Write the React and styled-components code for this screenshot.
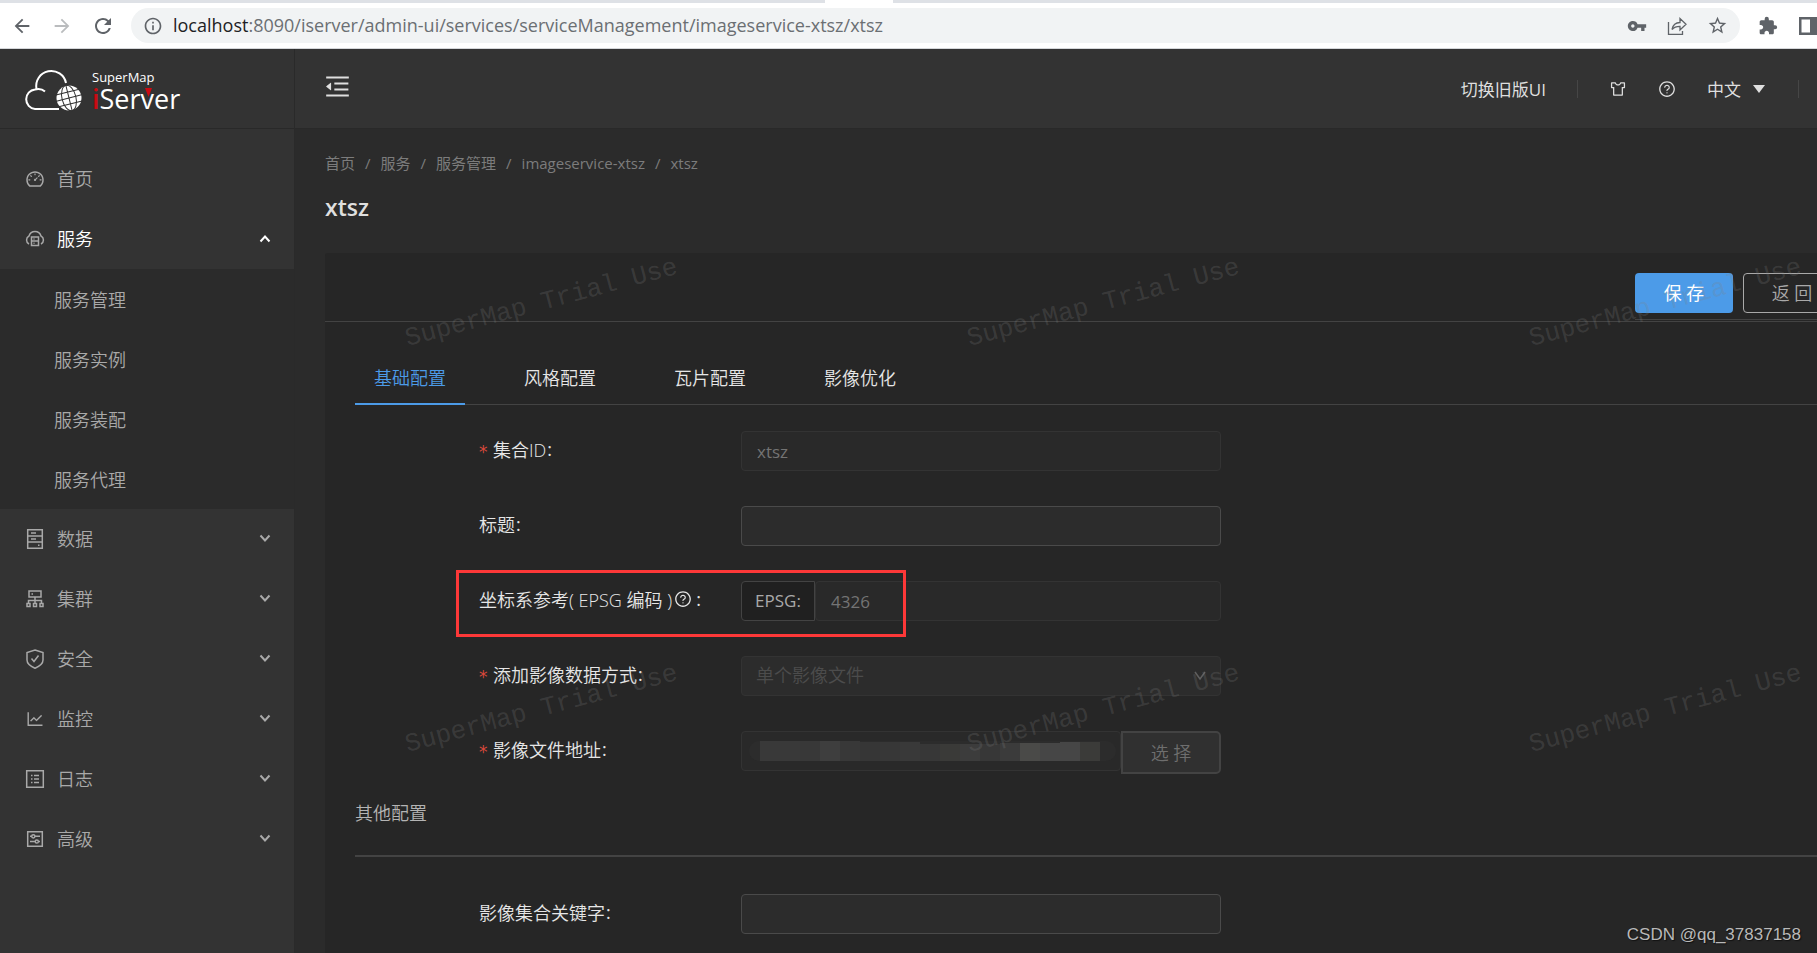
import React from "react";
import styled, { createGlobalStyle, css } from "styled-components";
import {
  AiOutlineDashboard,
  AiOutlineLineChart,
  AiOutlineMenuFold,
  AiOutlineQuestionCircle,
  AiOutlineSkin,
} from "react-icons/ai";
import {
  MdArrowBack,
  MdArrowForward,
  MdExtension,
  MdInfoOutline,
  MdRefresh,
  MdStarOutline,
  MdVpnKey,
} from "react-icons/md";

const GlobalStyle = createGlobalStyle`
* {
    box-sizing: border-box;
}
body {
    margin: 0;
    background-color: #2b2b2b;
    font-family: "Open Sans", "Noto Sans CJK SC", sans-serif;
    font-size: 18px;
    font-weight: 350;
    color: #dfdfdf;
}
button, input, select {
    font: inherit;
    color: inherit;
}
a {
    color: inherit;
    text-decoration: none;
}
`

const Window = styled.div`
height: 100vh;
display: flex;
flex-direction: column;
overflow: hidden;
`

//Browser bar
const TabStrip = styled.div`
height: 3px;
flex: none;
background-color: #dee1e6;
`

const ActiveTab = styled.div`
width: 68px;
height: 3px;
margin-left: 45.4%;
background-color: #ffffff;
`

const BrowserBar = styled.div`
height: 46px;
flex: none;
display: flex;
align-items: center;
padding-left: 11px;
background-color: #ffffff;
border-bottom: 1px solid #d5d7da;
color: #5f6368;
overflow: hidden;
`

const NavButton = styled.button`
width: 40px;
height: 24px;
flex: none;
display: flex;
align-items: center;
padding: 0;
border: 0;
background: none;
color: ${(props) => (props.disabled ? "#babcbe" : "#5f6368")};
`

const AddressBar = styled.div`
flex: 1;
height: 35px;
display: flex;
align-items: center;
gap: 10px;
padding: 0 12px;
border-radius: 18px;
background-color: #f1f3f4;
`

const Url = styled.div`
flex: 1;
padding-bottom: 2px;
font-size: 18px;
font-weight: 400;
color: #6b6f73;
span {
    color: #202124;
}
`

const AddressIcons = styled.div`
display: flex;
align-items: center;
gap: 20px;
`

const BrowserIcons = styled.div`
display: flex;
flex: none;
align-items: center;
gap: 20px;
margin-right: -1px;
padding-left: 18px;
`

//Page frame
const Page = styled.div`
flex: 1;
display: flex;
min-height: 0;
position: relative;
overflow: hidden;
`

const Sidebar = styled.aside`
width: 295px;
flex: none;
background-color: #333333;
border-right: 1px solid #2a2a2a;
`

const Brand = styled.a`
height: 80px;
display: flex;
align-items: center;
padding-left: 24px;
border-bottom: 1px solid #292929;
`

const Menu = styled.nav`
padding-top: 20px;
`

const MenuItem = styled.a`
height: 60px;
display: flex;
align-items: center;
padding: 0 23px 0 25px;
color: ${(props) => (props.$open ? "#ffffff" : "#a9a9a9")};
span {
    flex: 1;
    padding: 0 0 2px 12px;
}
> svg:first-child {
    color: #a9a9a9;
}
`

const SubMenu = styled.div`
background-color: #2b2b2b;
`

const SubItem = styled.a`
height: 60px;
display: flex;
align-items: center;
padding: 0 0 1px 54px;
color: #a9a9a9;
`

const Main = styled.main`
flex: 1;
min-width: 0;
display: flex;
flex-direction: column;
`

const TopBar = styled.header`
height: 80px;
flex: none;
display: flex;
align-items: center;
justify-content: space-between;
padding-left: 28px;
background-color: #333333;
border-bottom: 1px solid #292929;
`

const IconButton = styled.button`
display: flex;
padding: 0;
border: 0;
background: none;
color: #dfdfdf;
`

const FoldButton = styled(IconButton)`
padding-bottom: 4px;
`

const TopLinks = styled.div`
display: flex;
align-items: center;
gap: 31px;
padding-right: 18px;
font-size: 17px;
font-weight: 400;
`

const Divider = styled.i`
width: 1px;
height: 18px;
background-color: #464646;
`

const Language = styled.button`
display: flex;
align-items: center;
gap: 12px;
padding: 0 2px 0 0;
border: 0;
background: none;
`

//Content
const Content = styled.div`
flex: 1;
display: flex;
flex-direction: column;
padding: 19px 0 0 30px;
`

const Breadcrumb = styled.nav`
display: flex;
gap: 10px;
font-size: 15px;
font-weight: 400;
line-height: 30px;
color: #7c7c7c;
`

const Title = styled.h1`
margin: 12px 0 29px;
font-size: 23px;
line-height: 34px;
font-weight: 600;
`

const Panel = styled.section`
flex: 1;
background-color: #262626;
border-radius: 3px 0 0 0;
`

const Toolbar = styled.div`
display: flex;
justify-content: flex-end;
height: 69px;
padding-top: 20px;
border-bottom: 1px solid #434343;
`

const Actions = styled.div`
display: flex;
gap: 10px;
height: 47px;
margin-right: -24px;
border-bottom: 1px solid #434343;
`

const Button = styled.button`
width: 98px;
height: 40px;
padding: 0 0 2px;
border-radius: 4px;
white-space: pre;
${(props) =>
  props.$primary
    ? css`
        border: 0;
        background-color: #4c9be8;
        color: #ffffff;
        font-weight: 400;
      `
    : css`
        border: 1px solid #a9a9a9;
        background-color: transparent;
        color: #a9a9a9;
      `}
`

const Tabs = styled.div`
display: flex;
gap: 40px;
margin: 30px 0 26px 30px;
border-bottom: 1px solid #434343;
`

const Tab = styled.button`
height: 53px;
margin-bottom: -1px;
padding: 0 19px 2px;
border: 0;
border-bottom: 2px solid ${(props) => (props.$active ? "#4c9be8" : "transparent")};
background: none;
color: ${(props) => (props.$active ? "#4c9be8" : "#e6e6e6")};
`

const Form = styled.form`
display: grid;
gap: 35px;
`

const Row = styled.div`
display: grid;
grid-template-columns: 262px 480px;
height: 40px;
margin-left: 154px;
position: relative;
`

const Label = styled.label`
display: flex;
align-items: center;
height: 36px;
color: #e6e6e6;
`

const Required = styled.span`
width: 14px;
padding-top: 5px;
font-family: "DejaVu Sans", sans-serif;
font-size: 17px;
font-weight: 400;
color: #d9483b;
`

const Colon = styled.span`
padding-left: 1px;
font-weight: 400;
`

const HelpIcon = styled(AiOutlineQuestionCircle)`
margin: 0 3px 0 2px;
`

const Input = styled.input`
width: 100%;
min-width: 0;
height: 40px;
padding: 0 15px;
border: 1px solid #4a4a4a;
border-radius: 4px;
background-color: #2c2c2c;
font-size: 17px;
font-weight: 400;
&:disabled {
    border-color: #333333;
    background-color: #292929;
    color: #747474;
}
`

const Group = styled.div`
display: flex;
position: relative;
`

const Prefix = styled.span`
width: 74px;
flex: none;
line-height: 38px;
text-align: center;
border: 1px solid #434343;
border-radius: 4px 0 0 4px;
background-color: #202020;
font-size: 17px;
font-weight: 400;
color: #a9a9a9;
`

const SelectBox = styled.div`
position: relative;
svg {
    position: absolute;
    right: 15px;
    top: 15px;
}
`

const Select = styled.select`
appearance: none;
width: 100%;
height: 40px;
padding: 0 14px 2px;
border: 1px solid #333333;
border-radius: 4px;
background-color: #2c2c2c;
color: #4c4c4c;
opacity: 1;
`

const PickButton = styled.button`
width: 100px;
height: 43px;
flex: none;
padding: 0 0 2px;
white-space: pre;
border: 2px solid #434343;
border-radius: 0 5px 5px 0;
background-color: #303030;
color: #6e6e6e;
`

//Pixelated strip that hides the file path
const Mosaic = styled.div`
position: absolute;
left: 8px;
top: 10px;
width: 367px;
height: 20px;
display: flex;
padding-left: 11px;
border-radius: 10px;
background-color: #2c2c2c;
`

const Tile = styled.i`
width: 20px;
height: ${(props) => props.$height}px;
align-self: flex-end;
background-color: ${(props) => props.$color};
`

const Highlight = styled.div`
position: absolute;
left: -23px;
top: -11px;
width: 450px;
height: 67px;
border: 3px solid #fd3838;
pointer-events: none;
`

const SectionTitle = styled.h2`
margin: 27px 0 37px 30px;
padding-bottom: 27px;
border-bottom: 2px solid #434343;
font-size: 18px;
line-height: 30px;
font-weight: 350;
color: #b4b4b4;
`

//Marks laid over the whole page
const WatermarkLayer = styled.div`
position: absolute;
inset: 51px 0 0 260px;
display: grid;
grid-template-columns: repeat(3, 562px);
grid-auto-rows: 406px;
place-items: center;
overflow: hidden;
pointer-events: none;
`

const Watermark = styled.span`
font-family: "Liberation Mono", monospace;
font-size: 26px;
font-weight: 400;
white-space: nowrap;
color: rgba(128, 128, 128, 0.24);
transform: rotate(-15deg);
`

const Signature = styled.div`
position: absolute;
right: 16px;
bottom: 6px;
font-family: "Liberation Sans", sans-serif;
font-size: 17px;
font-weight: 400;
line-height: 24px;
color: #b9b9b9;
text-shadow: 1px 1px 1px #111111;
`

const Logo = () => (
  <svg width="160" height="60" viewBox="0 -12 160 60" aria-label="SuperMap iServer">
    <g fill="none" stroke="#fff" strokeWidth="2">
      <path d="M35 38H11A9.800 9.800 0 0 1 11 18.500Q17 17 21 20.500" />
      <path d="M12.500 18A15 15 0 0 1 42 12" />
    </g>
    <circle cx="45" cy="27" r="12.500" fill="#fff" />
    <g fill="none" stroke="#333" strokeWidth="1" transform="rotate(-14 45 27)">
      <path d="M32 27H58M33 21H57M33 33H57M45 14V40" />
      <ellipse cx="45" cy="27" rx="7" ry="13" />
    </g>
    <text x="68" y="11" fill="#fff" fontSize="13" fontWeight="400" fontFamily="Open Sans">SuperMap</text>
    <text x="68" y="38" fill="#fff" fontSize="27" fontWeight="400" fontFamily="Open Sans">
      <tspan fill="#cc0a12" fontWeight="600">i</tspan>Server
    </text>
    <path d="M121 17H128L124.500 26Z" fill="#cc0a12" />
  </svg>
)

const MenuIcon = ({ children }) => (
  <svg width="20" height="20" viewBox="0 0 20 20" fill="none" stroke="currentColor" strokeWidth="1.500">
    {children}
  </svg>
)

const CloudIcon = () => (
  <MenuIcon>
    <path d="M4 15A4.500 4.500 0 0 1 4 7A6.300 6.300 0 0 1 16 7A4.500 4.500 0 0 1 16 15" />
    <path d="M6.500 8H13.500V16.500H6.500ZM6.500 12H13.500M8.500 10H9.500M8.500 14.300H9.500" />
  </MenuIcon>
)

const DataIcon = () => (
  <MenuIcon>
    <path d="M2.700 .8H17.300V19.200H2.700ZM3 7H17M3 13H17M6 4H11M6 10H11M13 16.300H14.500" />
  </MenuIcon>
)

const ClusterIcon = () => (
  <MenuIcon>
    <path d="M4 2H16V8H4ZM6.500 5H8M10 8V15M3.500 15V11.500H16.500V15" />
    <path d="M2 14.500H5V17.500H2ZM8.500 14.500H11.500V17.500H8.500ZM15 14.500H18V17.500H15Z" />
  </MenuIcon>
)

const ShieldIcon = () => (
  <MenuIcon>
    <path d="M10 1L18 3.500V11C18 15 14 17.500 10 19.200C6 17.500 2 15 2 11V3.500Z" />
    <path d="M6.500 9.500L9 12.500L13.500 6.500" />
  </MenuIcon>
)

const LogIcon = () => (
  <MenuIcon>
    <path d="M1.700 1.700H18.300V18.300H1.700Z" />
    <path d="M6 6.500H7.500M9 6.500H14M6 10H7.500M9 10H14M6 13.500H7.500M9 13.500H14" />
  </MenuIcon>
)

const SlidersIcon = () => (
  <MenuIcon>
    <path d="M2.700 2.700H17.300V17.300H2.700ZM5 7.300H6.500M10 7.300H15M5 12.500H10M13.500 12.500H15" />
    <circle cx="8.300" cy="7.300" r="1.600" />
    <circle cx="11.800" cy="12.500" r="1.600" />
  </MenuIcon>
)

const Chevron = ({ up }) => (
  <svg width="12" height="12" viewBox="0 0 12 12" fill="none" stroke="currentColor" strokeWidth="2">
    <path d={up ? "M1.500 8.500L6 3.500L10.500 8.500" : "M1.500 2.500L6 7.500L10.500 2.500"} />
  </svg>
)

const ShareIcon = () => (
  <svg width="20" height="20" viewBox="0 0 20 20" fill="none" stroke="currentColor" strokeWidth="1.300">
    <path d="M1.500 6V18.300H15.500V15" />
    <path d="M5 13.500C6 8.500 9 6.500 13 6.500V2.500L19 8.300L13 14V10.300C9.500 10.300 7 11 5 13.500Z" />
  </svg>
)

const SidePanelIcon = () => (
  <svg width="20" height="20" viewBox="0 0 20 20" fill="currentColor">
    <path d="M1 1H20V19H1ZM3.500 3.500V16.500H12V3.500Z" fillRule="evenodd" />
  </svg>
)

const services = ["服务管理", "服务实例", "服务装配", "服务代理"]

const menu = [
  { name: "数据", icon: <DataIcon /> },
  { name: "集群", icon: <ClusterIcon /> },
  { name: "安全", icon: <ShieldIcon /> },
  { name: "监控", icon: <AiOutlineLineChart size={20} /> },
  { name: "日志", icon: <LogIcon /> },
  { name: "高级", icon: <SlidersIcon /> },
]

const crumbs = ["首页", "服务", "服务管理", "imageservice-xtsz", "xtsz"]

const tabs = ["基础配置", "风格配置", "瓦片配置", "影像优化"]

const tiles = [
  ["#393939", 20], ["#393939", 20], ["#383838", 20], ["#3e3e3e", 20], ["#383838", 20],
  ["#363636", 19], ["#373737", 19], ["#393939", 19], ["#373737", 17], ["#3a3a38", 17],
  ["#3c3c3c", 17], ["#373737", 17], ["#3b3b3b", 18], ["#4a4a48", 18], ["#464646", 18],
  ["#464646", 19], ["#3b3b39", 19],
]

const Field = ({ id, label, required, children }) => (
  <Row>
    <Label htmlFor={id}>
      {required && <Required>*</Required>}
      {label}
      <Colon>:</Colon>
    </Label>
    {children}
  </Row>
)

const Browser = () => (
  <>
    <TabStrip><ActiveTab /></TabStrip>
    <BrowserBar>
      <NavButton aria-label="后退"><MdArrowBack size={22} /></NavButton>
      <NavButton aria-label="前进" disabled><MdArrowForward size={22} /></NavButton>
      <NavButton aria-label="刷新"><MdRefresh size={24} /></NavButton>
      <AddressBar>
        <MdInfoOutline size={20} />
        <Url>
          <span>localhost</span>:8090/iserver/admin-ui/services/serviceManagement/imageservice-xtsz/xtsz
        </Url>
        <AddressIcons>
          <MdVpnKey size={20} />
          <ShareIcon />
          <MdStarOutline size={21} />
        </AddressIcons>
      </AddressBar>
      <BrowserIcons>
        <MdExtension size={20} />
        <SidePanelIcon />
      </BrowserIcons>
    </BrowserBar>
  </>
)

const SideMenu = () => (
  <Sidebar>
    <Brand href="#home"><Logo /></Brand>
    <Menu>
      <MenuItem href="#home">
        <AiOutlineDashboard size={20} />
        <span>首页</span>
      </MenuItem>
      <MenuItem href="#services" $open>
        <CloudIcon />
        <span>服务</span>
        <Chevron up />
      </MenuItem>
      <SubMenu>
        {services.map((name) => (
          <SubItem href="#services" key={name}>{name}</SubItem>
        ))}
      </SubMenu>
      {menu.map((item) => (
        <MenuItem href="#menu" key={item.name}>
          {item.icon}
          <span>{item.name}</span>
          <Chevron />
        </MenuItem>
      ))}
    </Menu>
  </Sidebar>
)

const Header = () => (
  <TopBar>
    <FoldButton aria-label="收起菜单"><AiOutlineMenuFold size={29} /></FoldButton>
    <TopLinks>
      <a href="#old">切换旧版UI</a>
      <Divider />
      <IconButton aria-label="主题"><AiOutlineSkin size={18} /></IconButton>
      <IconButton aria-label="帮助"><AiOutlineQuestionCircle size={18} /></IconButton>
      <Language>
        中文
        <svg width="12" height="8" viewBox="0 0 12 8" fill="currentColor"><path d="M0 0H12L6 8Z" /></svg>
      </Language>
      <Divider />
    </TopLinks>
  </TopBar>
)

const ServiceForm = () => (
  <Form>
    <Field id="setId" label="集合ID" required>
      <Input id="setId" defaultValue="xtsz" disabled />
    </Field>
    <Field id="title" label="标题">
      <Input id="title" />
    </Field>
    <Row>
      <Label htmlFor="epsg">
        坐标系参考( EPSG 编码 )
        <HelpIcon size={18} />
        <Colon>:</Colon>
      </Label>
      <Group>
        <Prefix>EPSG:</Prefix>
        <Input id="epsg" defaultValue="4326" disabled />
      </Group>
      <Highlight />
    </Row>
    <Field id="source" label="添加影像数据方式" required>
      <SelectBox>
        <Select id="source" disabled>
          <option>单个影像文件</option>
        </Select>
        <svg width="12" height="10" viewBox="0 0 12 10" fill="none" stroke="#606060" strokeWidth="1.500">
          <path d="M1 1L6 8L11 1" />
        </svg>
      </SelectBox>
    </Field>
    <Field id="path" label="影像文件地址" required>
      <Group>
        <Input id="path" disabled />
        <PickButton type="button" disabled>选 择</PickButton>
        <Mosaic>
          {tiles.map(([color, height], i) => (
            <Tile key={i} $color={color} $height={height} />
          ))}
        </Mosaic>
      </Group>
    </Field>
  </Form>
)

export default function App() {
  return (
    <Window>
      <GlobalStyle />
      <Browser />
      <Page>
        <SideMenu />
        <Main>
          <Header />
          <Content>
            <Breadcrumb>
              {crumbs.map((name, i) => (
                <React.Fragment key={name}>
                  {i > 0 && <span>/</span>}
                  <a href="#crumb">{name}</a>
                </React.Fragment>
              ))}
            </Breadcrumb>
            <Title>xtsz</Title>
            <Panel>
              <Toolbar>
                <Actions>
                  <Button $primary>保 存</Button>
                  <Button>返 回</Button>
                </Actions>
              </Toolbar>
              <Tabs role="tablist">
                {tabs.map((name, i) => (
                  <Tab key={name} role="tab" aria-selected={i === 0} $active={i === 0}>{name}</Tab>
                ))}
              </Tabs>
              <ServiceForm />
              <SectionTitle>其他配置</SectionTitle>
              <Field id="keywords" label="影像集合关键字">
                <Input id="keywords" />
              </Field>
            </Panel>
          </Content>
        </Main>
        <WatermarkLayer>
          {[...Array(6)].map((_, i) => (
            <Watermark key={i}>SuperMap Trial Use</Watermark>
          ))}
        </WatermarkLayer>
        <Signature>CSDN @qq_37837158</Signature>
      </Page>
    </Window>
  )
}
